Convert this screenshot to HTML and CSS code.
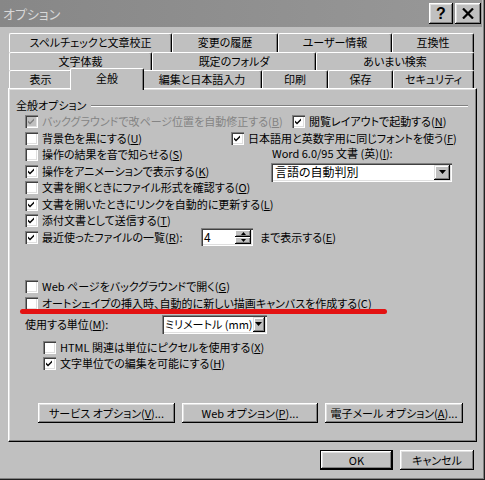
FILE: index.html
```html
<!DOCTYPE html>
<html lang="ja">
<head>
<meta charset="utf-8">
<title>オプション</title>
<link rel="stylesheet" href="styles.css">
</head>
<body>
<div class="dialog">
  <div class="titlebar">
    <span class="title">オプション</span>
    <div class="tb-btns">
      <div class="tb-btn help">?</div>
      <div class="tb-btn close"><svg width="12" height="11" viewBox="0 0 12 11"><path d="M1 0.5 L11 10.5 M11 0.5 L1 10.5" stroke="#000" stroke-width="2.2"/></svg></div>
    </div>
  </div>
  <div class="body">
    <div class="tabs">
      <div class="tabrow r1">
        <div class="tab">スペルチェックと文章校正</div>
        <div class="tab">変更の履歴</div>
        <div class="tab">ユーザー情報</div>
        <div class="tab">互換性</div>
      </div>
      <div class="tabrow r2">
        <div class="tab">文字体裁</div>
        <div class="tab">既定のフォルダ</div>
        <div class="tab">あいまい検索</div>
      </div>
      <div class="tabrow r3">
        <div class="tab">表示</div>
        <div class="tab active">全般</div>
        <div class="tab">編集と日本語入力</div>
        <div class="tab">印刷</div>
        <div class="tab">保存</div>
        <div class="tab">セキュリティ</div>
      </div>
    </div>
    <div class="panel">
      <div class="section"><span>全般オプション</span><span class="rule"></span></div>
      <div class="opts">
        <div class="row">
          <div class="lead lead-1">
            <span class="cb disabled"><svg class="chk" viewBox="0 0 7 7"><path d="M0 2.5 L2 4.5 L6 0.5 L6 2.5 L2 6.5 L0 4.5 Z"/></svg></span>
            <span class="lbl dim">バックグラウンドで改ページ位置を自動修正する(<u>B</u>)</span>
          </div>
          <span class="cb"><svg class="chk" viewBox="0 0 7 7"><path d="M0 2.5 L2 4.5 L6 0.5 L6 2.5 L2 6.5 L0 4.5 Z"/></svg></span>
          <span class="lbl">閲覧レイアウトで起動する(<u>N</u>)</span>
        </div>
        <div class="row">
          <div class="lead lead-2">
            <span class="cb"></span>
            <span class="lbl">背景色を黒にする(<u>U</u>)</span>
          </div>
          <span class="cb"><svg class="chk" viewBox="0 0 7 7"><path d="M0 2.5 L2 4.5 L6 0.5 L6 2.5 L2 6.5 L0 4.5 Z"/></svg></span>
          <span class="lbl">日本語用と英数字用に同じフォントを使う(<u>F</u>)</span>
        </div>
        <div class="row">
          <div class="lead lead-3">
            <span class="cb"></span>
            <span class="lbl">操作の結果を音で知らせる(<u>S</u>)</span>
          </div>
          <span class="lbl raise">Word 6.0/95 文書 (英)(<u>I</u>):</span>
        </div>
        <div class="row">
          <div class="lead lead-4">
            <span class="cb"><svg class="chk" viewBox="0 0 7 7"><path d="M0 2.5 L2 4.5 L6 0.5 L6 2.5 L2 6.5 L0 4.5 Z"/></svg></span>
            <span class="lbl">操作をアニメーションで表示する(<u>K</u>)</span>
          </div>
          <div class="combo combo-lang">
            <span class="combo-text">言語の自動判別</span>
            <span class="combo-btn"><svg width="7" height="4" viewBox="0 0 7 4"><path d="M0 0 H7 L3.5 4 Z"/></svg></span>
          </div>
        </div>
        <div class="row">
          <span class="cb"></span>
          <span class="lbl">文書を開くときにファイル形式を確認する(<u>O</u>)</span>
        </div>
        <div class="row">
          <span class="cb"><svg class="chk" viewBox="0 0 7 7"><path d="M0 2.5 L2 4.5 L6 0.5 L6 2.5 L2 6.5 L0 4.5 Z"/></svg></span>
          <span class="lbl">文書を開いたときにリンクを自動的に更新する(<u>L</u>)</span>
        </div>
        <div class="row">
          <span class="cb"><svg class="chk" viewBox="0 0 7 7"><path d="M0 2.5 L2 4.5 L6 0.5 L6 2.5 L2 6.5 L0 4.5 Z"/></svg></span>
          <span class="lbl">添付文書として送信する(<u>T</u>)</span>
        </div>
        <div class="row">
          <div class="lead lead-8">
            <span class="cb"><svg class="chk" viewBox="0 0 7 7"><path d="M0 2.5 L2 4.5 L6 0.5 L6 2.5 L2 6.5 L0 4.5 Z"/></svg></span>
            <span class="lbl">最近使ったファイルの一覧(<u>R</u>):</span>
          </div>
          <div class="spin">
            <span class="spin-text">4</span>
            <span class="spin-btns">
              <span class="spin-btn"><svg width="5" height="3" viewBox="0 0 5 3"><path d="M2.5 0 L5 3 H0 Z"/></svg></span>
              <span class="spin-btn"><svg width="5" height="3" viewBox="0 0 5 3"><path d="M0 0 H5 L2.5 3 Z"/></svg></span>
            </span>
          </div>
          <span class="lbl after-spin">まで表示する(<u>E</u>)</span>
        </div>
        <div class="row gap-top">
          <span class="cb"></span>
          <span class="lbl">Web ページをバックグラウンドで開く(<u>G</u>)</span>
        </div>
        <div class="row">
          <span class="cb"></span>
          <span class="lbl">オートシェイプの挿入時、自動的に新しい描画キャンバスを作成する(<u>C</u>)</span>
        </div>
        <div class="row unit-row">
          <div class="lead lead-unit">
            <span class="lbl">使用する単位(<u>M</u>):</span>
          </div>
          <div class="combo combo-unit">
            <span class="combo-text">ミリメートル (mm)</span>
            <span class="combo-btn"><svg width="7" height="4" viewBox="0 0 7 4"><path d="M0 0 H7 L3.5 4 Z"/></svg></span>
          </div>
        </div>
        <div class="row indent html-row">
          <span class="cb"></span>
          <span class="lbl">HTML 関連は単位にピクセルを使用する(<u>X</u>)</span>
        </div>
        <div class="row indent">
          <span class="cb"><svg class="chk" viewBox="0 0 7 7"><path d="M0 2.5 L2 4.5 L6 0.5 L6 2.5 L2 6.5 L0 4.5 Z"/></svg></span>
          <span class="lbl">文字単位での編集を可能にする(<u>H</u>)</span>
        </div>
      </div>
      <div class="btn-row">
        <div class="btn w-service">サービス オプション(<u>V</u>)...</div>
        <div class="btn w-web">Web オプション(<u>P</u>)...</div>
        <div class="btn w-mail">電子メール オプション(<u>A</u>)...</div>
      </div>
      <div class="redline"></div>
    </div>
    <div class="footer">
      <div class="btn default w-ok">OK</div>
      <div class="btn w-cancel">キャンセル</div>
    </div>
  </div>
</div>
</body>
</html>
```
FILE: styles.css
```css
* { box-sizing: border-box; }
html, body { margin: 0; padding: 0; }
body {
  width: 485px;
  height: 480px;
  overflow: hidden;
  background: #c0c0c0;
  font-family: "Noto Sans CJK JP", "Noto Sans", sans-serif;
  font-size: 11px;
  line-height: 1;
  color: #000;
  font-feature-settings: "palt";
}
u { text-decoration: underline; text-underline-offset: 1px; }

.dialog {
  width: 485px;
  height: 480px;
  background: #c0c0c0;
  box-shadow: inset -1px -1px #202020, inset -2px -2px #808080;
  display: flex;
  flex-direction: column;
}

.titlebar {
  height: 27px;
  margin-right: 3px;
  background: linear-gradient(90deg, #878787, #989898);
  display: flex;
  align-items: center;
  padding-left: 3px;
}
.title {
  color: #d8d8d8;
  font-size: 13px;
}
.tb-btns {
  margin-left: auto;
  display: flex;
  gap: 2px;
  padding-right: 1px;
}
.tb-btn {
  width: 24px;
  height: 21px;
  background: #c0c0c0;
  box-shadow: inset -1px -1px #000, inset 1px 1px #fff, inset -2px -2px #808080, inset 2px 2px #dfdfdf;
  display: flex;
  align-items: center;
  justify-content: center;
}
.tb-btn.close { width: 26px; }
.tb-btn.help {
  font-family: "Liberation Sans", sans-serif;
  font-weight: bold;
  font-size: 16px;
}

.body {
  padding: 6px 0 0 8px;
  display: flex;
  flex-direction: column;
}

.tabs {
  margin-left: 1px;
  width: 465px;
}
.tabrow {
  display: grid;
  height: 18px;
}
.r1 { height: 19px; grid-template-columns: 163px 106px 114px 82px; }
.r2 { grid-template-columns: 143px 164px 158px; }
.r3 { grid-template-columns: 63px 70px 120px 66px 65px 81px; }

.tab {
  background: #c0c0c0;
  border-top: 1px solid #fff;
  border-left: 1px solid #fff;
  border-right: 1px solid #000;
  box-shadow: inset -1px 0 #808080;
  border-radius: 2px 2px 0 0;
  display: flex;
  align-items: center;
  justify-content: center;
  white-space: nowrap;
  padding-bottom: 1px;
}
.tab.active {
  margin: -2px -2px -2px -2px;
  position: relative;
  z-index: 2;
  padding-bottom: 3px;
}

.panel {
  width: 469px;
  height: 354px;
  border: 1px solid;
  border-color: #fff #000 #000 #fff;
  box-shadow: inset -1px -1px #808080, inset 1px 1px #dfdfdf;
  padding: 8px 8px 18px 7px;
  display: flex;
  flex-direction: column;
  position: relative;
  z-index: 1;
}

.section {
  display: flex;
  align-items: center;
  height: 16.5px;
}
.rule {
  flex: 1;
  height: 2px;
  border-top: 1px solid #808080;
  border-bottom: 1px solid #fff;
  margin-left: 5px;
  margin-top: 1px;
}

.opts {
  margin-left: 9px;
  display: flex;
  flex-direction: column;
}
.row {
  height: 16.5px;
  display: flex;
  align-items: center;
  white-space: nowrap;
}
.lead {
  flex: none;
  display: flex;
  align-items: center;
}
.lead-1 { width: 267px; }
.lead-2 { width: 206px; }
.lead-3 { width: 247px; }
.lead-4 { width: 246px; }
.lead-8 { width: 176px; }
.lead-unit { width: 137px; }

.cb {
  width: 13px;
  height: 13px;
  flex: none;
  background: #fff;
  box-shadow: inset 1px 1px #808080, inset 2px 2px #404040, inset -1px -1px #fff, inset -2px -2px #dfdfdf;
  margin-right: 4px;
  display: flex;
  align-items: center;
  justify-content: center;
}
.cb.disabled { background: #c0c0c0; }
.chk { width: 7px; height: 7px; fill: #000; }
.cb.disabled .chk { fill: #808080; }

.lbl { white-space: nowrap; }
.dim { color: #848484; }
.raise { margin-top: -3px; }

.combo {
  height: 19px;
  background: #fff;
  box-shadow: inset 1px 1px #808080, inset 2px 2px #404040, inset -1px -1px #fff, inset -2px -2px #dfdfdf;
  display: flex;
  align-items: center;
  padding: 2px;
  flex: none;
}
.combo-lang { width: 181px; margin-top: 2px; }
.combo-unit { width: 105px; }
.combo-text {
  flex: 1;
  padding-left: 2px;
  font-size: 12px;
}
.combo-unit .combo-text { font-size: 11px; padding-left: 1px; }
.combo-btn {
  width: 16px;
  height: 15px;
  background: #c0c0c0;
  box-shadow: inset -1px -1px #000, inset 1px 1px #dfdfdf, inset -2px -2px #808080, inset 2px 2px #fff;
  display: flex;
  align-items: center;
  justify-content: center;
}

.spin {
  width: 52px;
  height: 18px;
  background: #fff;
  box-shadow: inset 1px 1px #808080, inset 2px 2px #404040, inset -1px -1px #fff, inset -2px -2px #dfdfdf;
  display: flex;
  align-items: center;
  padding: 2px;
  flex: none;
}
.spin-text { flex: 1; padding-left: 1px; font-size: 12px; }
.spin-btns {
  width: 16px;
  height: 14px;
  display: flex;
  flex-direction: column;
}
.spin-btn {
  flex: 1;
  background: #c0c0c0;
  box-shadow: inset -1px -1px #000, inset 1px 1px #fff, inset -2px -2px #808080;
  display: flex;
  align-items: center;
  justify-content: center;
}
.after-spin { margin-left: 7px; }

.gap-top { margin-top: 33px; }
.unit-row { height: 20px; margin-top: 2.5px; }
.html-row { margin-top: 5px; }
.indent { padding-left: 18px; }

.btn-row {
  margin-top: auto;
  margin-left: 22px;
  display: flex;
  gap: 7px;
}
.btn {
  height: 20px;
  background: #c0c0c0;
  box-shadow: inset -1px -1px #000, inset 1px 1px #fff, inset -2px -2px #808080, inset 2px 2px #dfdfdf;
  display: flex;
  align-items: center;
  justify-content: center;
  white-space: nowrap;
}
.w-service { width: 137px; }
.w-web { width: 136px; }
.w-mail { width: 138px; }

.btn.default {
  border: 1px solid #000;
  box-shadow: inset -1px -1px #000, inset 1px 1px #fff, inset -2px -2px #808080, inset 2px 2px #dfdfdf;
}
.w-ok { width: 73px; }
.w-cancel { width: 74px; }

.footer {
  width: 469px;
  margin-top: 8px;
  padding-right: 3px;
  display: flex;
  justify-content: flex-end;
  gap: 7px;
}
.footer .btn { height: 20px; }

.redline {
  position: absolute;
  left: 11px;
  top: 220px;
  width: 367px;
  height: 5px;
  border-radius: 3px;
  background: #e31212;
}
```
